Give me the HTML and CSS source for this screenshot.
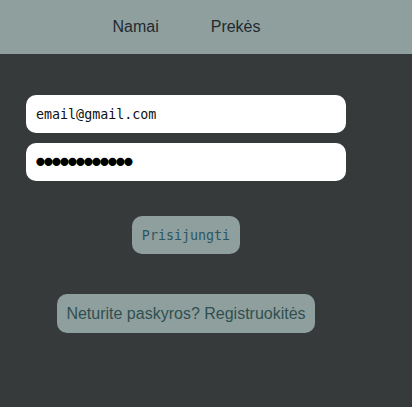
FILE: index.html
```html
<!DOCTYPE html>
<html lang="lt">
<head>
<meta charset="utf-8">
<link rel="stylesheet" href="styles.css">
</head>
<body>
<header class="top">
  <ul class="nav">
    <li><a href="#">Namai</a></li>
    <li><a href="#">Prekės</a></li>
  </ul>
</header>
<main class="login">
  <form class="form">
    <input class="field" type="email" value="email@gmail.com">
    <input class="field field-pass" type="password" value="aaaaaaaaaaaa">
    <div class="actions">
      <button class="btn-login" type="button">Prisijungti</button>
    </div>
    <div class="actions">
      <button class="btn-register" type="button">Neturite paskyros? Registruokitės</button>
    </div>
  </form>
</main>
</body>
</html>
```

FILE: styles.css
```css
html, body {
  margin: 0;
  padding: 0;
  height: 100%;
}
body {
  background: #363a3b;
  font-family: "Liberation Sans", Arial, sans-serif;
}
.top {
  background: #8f9f9e;
  height: 54px;
  display: flex;
  align-items: center;
}
.nav {
  list-style: none;
  margin: 0;
  padding: 0 0 0 1px;
  display: flex;
  gap: 52px;
  width: 100%;
  justify-content: center;
  transform: translateX(-20px);
}
.nav a {
  color: #1f2a30;
  text-decoration: none;
  font-size: 16px;
}
.login {
  padding: 41px 26px 0;
}
.form {
  display: flex;
  flex-direction: column;
  width: 320px;
}
.field {
  box-sizing: border-box;
  width: 320px;
  height: 38px;
  border: none;
  border-radius: 10px;
  background: #fff;
  padding: 0 10px;
  margin: 0 0 10px;
  font-family: "DejaVu Sans Mono", monospace;
  font-size: 13.33px;
  color: #111;
  outline: none;
}
.field-pass {
  font-size: 28px;
  letter-spacing: -8.86px;
  padding-left: 6px;
  color: #000;
}
.actions {
  display: flex;
  justify-content: center;
}
.btn-login {
  margin-top: 25px;
  height: 38px;
  padding: 0 10px;
  border: none;
  border-radius: 10px;
  background: #8f9f9e;
  color: #2d5663;
  font-family: "DejaVu Sans Mono", monospace;
  font-size: 13.33px;
}
.btn-register {
  margin-top: 40px;
  height: 39px;
  padding: 0 9px;
  border: none;
  border-radius: 10px;
  background: #8f9f9e;
  color: #2f4f4f;
  font-family: "Liberation Sans", Arial, sans-serif;
  font-size: 16px;
}
```
